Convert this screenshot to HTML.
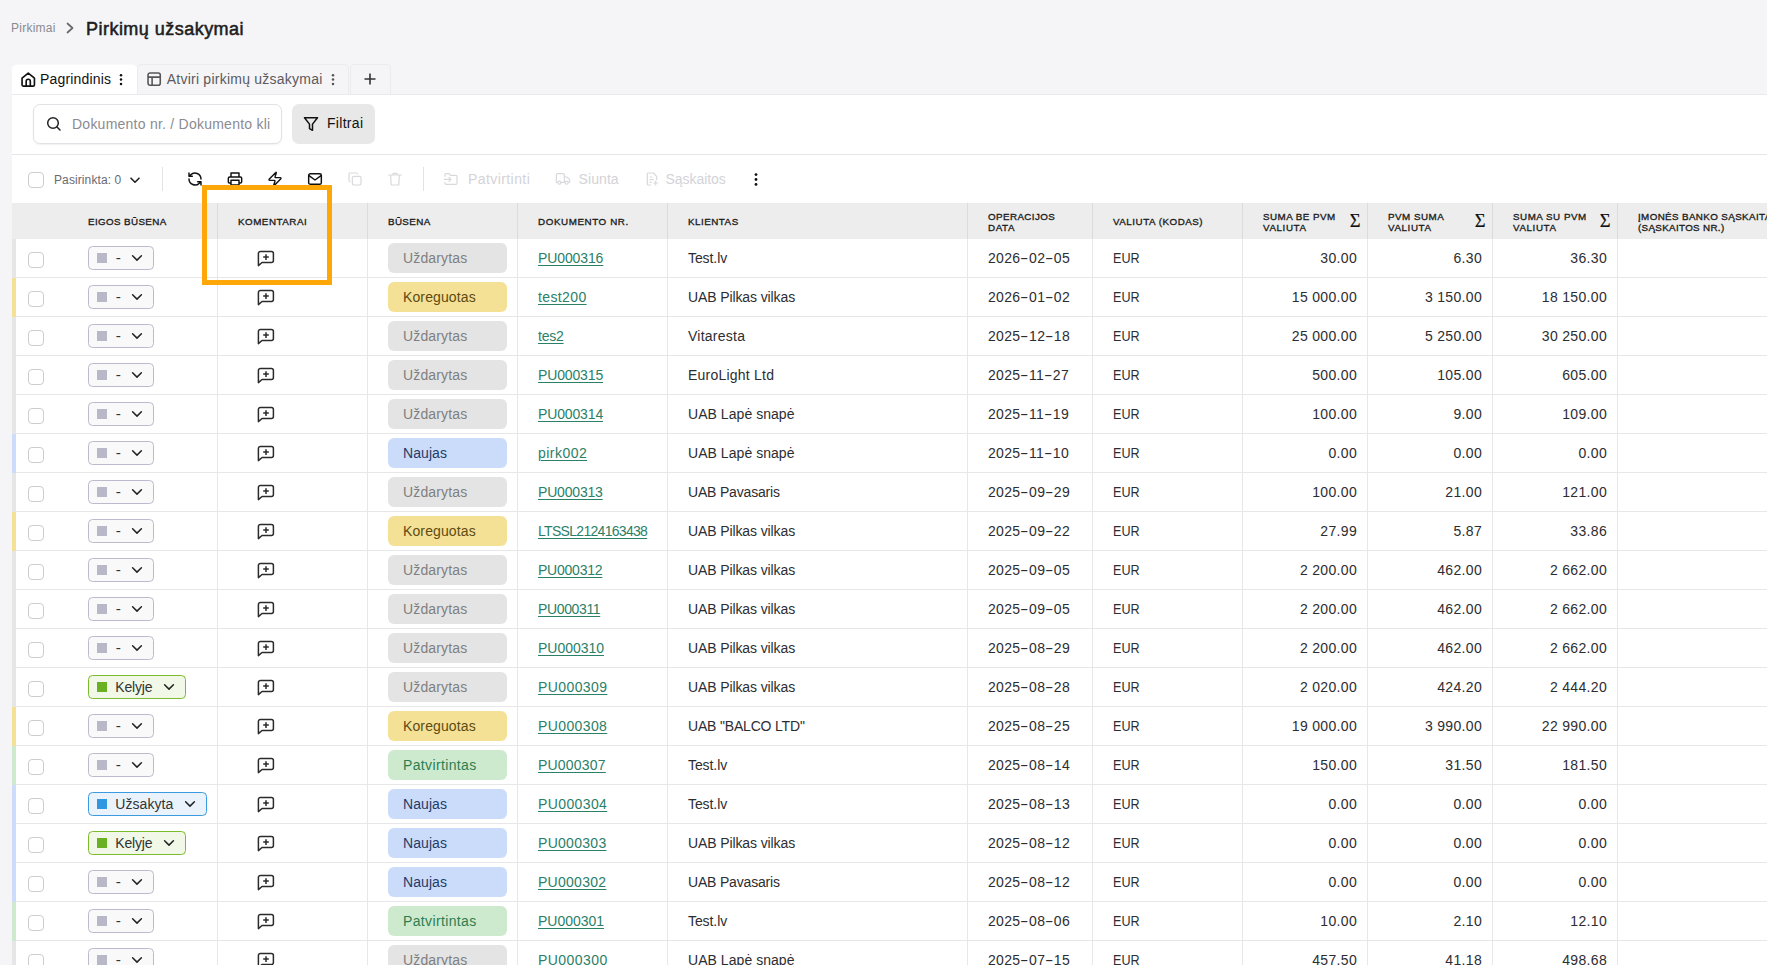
<!DOCTYPE html>
<html lang="lt">
<head>
<meta charset="utf-8">
<title>Pirkimų užsakymai</title>
<style>
*{box-sizing:border-box}
html,body{margin:0;padding:0}
body{width:1767px;height:965px;overflow:hidden;background:#f5f5f7;font-family:"Liberation Sans",sans-serif;font-size:14px;color:#2d2d31;position:relative}
svg{display:block}
.crumb{position:absolute;left:11px;top:20px;font-size:12px;line-height:16px;color:#8a8a8f;letter-spacing:.24px}
.crumbsep{position:absolute;left:65px;top:22px;width:10px;height:12px}
h1{position:absolute;left:86px;top:17px;margin:0;font-size:18px;line-height:24px;font-weight:400;color:#1d1d1f;-webkit-text-stroke:.55px #1d1d1f;letter-spacing:.47px;white-space:nowrap}
.tabs{position:absolute;left:12px;top:64px;height:31px;display:flex}
.tab{height:31px;border:1px solid #ebebee;border-bottom:none;border-radius:5px 5px 0 0;position:relative;color:#5a5a5f;font-size:14px;line-height:28px;white-space:nowrap}
.tab.act{background:#fff;color:#111;border-color:#fff;border-top-color:#f9f9fb}
.tab span{position:absolute;top:0}
.tab svg{position:absolute}
.panel{position:absolute;left:12px;top:94px;width:1760px;height:880px;background:#fff;border-top:1px solid #e9e9ec}
.search{position:absolute;left:21px;top:9px;width:249px;height:40px;border:1px solid #e2e2e6;border-radius:7px;background:#fff;box-shadow:0 1px 2px rgba(0,0,0,.06)}
.search svg{position:absolute;left:12px;top:11px;width:16px;height:16px}
.search span{position:absolute;left:38px;top:0;line-height:38px;font-size:14px;color:#8b8b90;letter-spacing:.24px;white-space:nowrap;width:200px;overflow:hidden}
.filter{position:absolute;left:280px;top:9px;width:83px;height:40px;border-radius:7px;background:#e8e8e8;color:#111}
.filter svg{position:absolute;left:11px;top:12px;width:16px;height:16px}
.filter span{position:absolute;left:35px;top:0;line-height:39px;font-size:14px;letter-spacing:.3px}
.hr{position:absolute;left:0;top:59px;width:100%;height:1px;background:#e6e6e9}
.tools{position:absolute;left:0;top:61px;width:100%;height:48px}
.cb{position:absolute;width:16px;height:16px;border:1px solid #cdcdd1;border-radius:4px;background:#fff}
.tools .cb{left:16px;top:16px}
.tools .sel{position:absolute;left:42px;top:16px;font-size:12px;line-height:16px;color:#6a6a70;letter-spacing:.1px;white-space:nowrap}
.tools .chev{position:absolute;left:117px;top:18px;width:12px;height:12px;color:#222}
.vr{position:absolute;top:11px;width:1px;height:24px;background:#e3e3e6}
.ic{position:absolute;top:15px;width:16px;height:16px}
.tbtn{position:absolute;top:0;line-height:47px;font-size:14px;color:#d3d3d8;letter-spacing:.35px;white-space:nowrap}
.thead{position:absolute;left:0;top:108px;width:100%;height:36px;background:#ededed}
.th{position:absolute;top:0;height:36px;border-left:1px solid #dcdcdf;font-size:9.8px;font-weight:400;color:#1c1c1c;-webkit-text-stroke:.33px #1c1c1c;line-height:11px;display:flex;align-items:center;padding-left:20px;white-space:nowrap;overflow:hidden}
.th.first{border-left:none}
.th>div{position:relative;top:.6px}
.th .sg{position:absolute;right:6.500px;top:8.500px;font-size:18.500px;-webkit-text-stroke:.2px #111;font-weight:400;line-height:18px;font-family:"Liberation Serif",serif;color:#111}
.tbody{position:absolute;left:0;top:144px;width:100%}
.tr{position:relative;height:39px;border-bottom:1px solid #e7e7e9;margin-left:4px}
.tr::before{content:"";position:absolute;left:-4px;top:0;width:4px;height:39px;background:#e6e6e6}
.tr.ko::before{background:#f5e196}
.tr.nw::before{background:#cddcfa}
.tr.ok::before{background:#cdeacf}
.td{position:absolute;top:0;height:38px;line-height:38px;white-space:nowrap;border-left:1px solid #e7e7e9;padding-left:20px;color:#2d2d31;letter-spacing:.05px}
.c0{left:0;width:201px;border-left:none;padding:0}
.c1{left:201px;width:150px}.c2{left:351px;width:150px}.c3{left:501px;width:150px}.c4{left:651px;width:300px}
.c5{left:951px;width:125px}.c6{left:1076px;width:150px}.c7{left:1226px;width:125px}.c8{left:1351px;width:125px}.c9{left:1476px;width:125px}.c10{left:1601px;width:200px}
.th.c0{left:0;width:205px;padding-left:76px}
.th.c1{left:205px;width:150px}.th.c2{left:355px;width:150px}.th.c3{left:505px;width:150px}.th.c4{left:655px;width:300px}.th.c5{left:955px;width:125px}.th.c6{left:1080px;width:150px}.th.c7{left:1230px;width:125px}.th.c8{left:1355px;width:125px}.th.c9{left:1480px;width:125px}.th.c10{left:1605px;width:200px}
.n{text-align:right;padding-right:10px;padding-left:0}
.num{letter-spacing:.32px}
.eur{display:inline-block;transform:scaleX(.9);transform-origin:0 50%}
.hy{display:inline-block;width:8.600px;text-align:center;letter-spacing:0;transform:scaleX(1.8)}
.dash{display:inline-block;transform:scaleX(1.1);margin-left:.8px;margin-right:-.8px}
.tr .cb{left:12px;top:13px}
.eg{position:absolute;left:72px;top:7px;height:24px;border:1px solid #bbbbcd;border-radius:4.500px;background:#f9f9fa;display:flex;align-items:center;padding:0 10px 0 8px;color:#333}
.eg i{display:block;width:10px;height:10px;background:#b8b8c8;margin-right:8.300px}
.eg b{font-weight:400;font-size:14px;line-height:21px;letter-spacing:.2px}
.eg .chev{width:12px;height:12px;margin-left:10.700px;color:#222}
.eg.e1{border-color:#7cbb2e;background:#f1f8e8}.eg.e1 i{background:#69b023}
.eg.e2{border-color:#3a9be0;background:#eaf3fc}.eg.e2 i{background:#2f97e0}
.cmt{position:absolute;left:39px;top:11px;width:18px;height:18px}
.bd{position:absolute;left:20px;top:4px;width:119px;height:30px;border-radius:6px;background:#e4e4e4;color:#7f7f7f;line-height:30px;padding-left:15px;font-size:14px;letter-spacing:.12px}
.ko .bd{background:#f5e196;color:#5e4b12}
.nw .bd{background:#cbdcfb;color:#1f3a68}
.ok .bd{background:#cdeacf;color:#2f7d4f}
.td a{color:#2b8068;text-decoration:underline;text-underline-offset:1.500px;text-decoration-thickness:1px}
.hl{position:absolute;left:202px;top:185px;width:130px;height:100px;border:5px solid #fda808;pointer-events:none}
</style>
</head>
<body>
<div class="crumb">Pirkimai</div>
<svg class="crumbsep" viewBox="0 0 10 12"><path d="M2.5 1.5L7.5 6l-5 4.5" fill="none" stroke="#6a6a6e" stroke-width="1.700" stroke-linecap="round" stroke-linejoin="round"/></svg>
<h1>Pirkimų užsakymai</h1>

<div class="tabs">
  <div class="tab act" style="width:125px">
    <svg style="left:6.800px;top:5.500px;width:16.500px;height:16.500px" viewBox="0 0 24 24"><path d="M3 10.5L12 3l9 7.500V20a2 2 0 0 1-2 2H5a2 2 0 0 1-2-2z" fill="none" stroke="#111" stroke-width="2.4" stroke-linejoin="round"/><path d="M9 22v-7a3 3 0 0 1 6 0v7" fill="none" stroke="#111" stroke-width="2.4"/></svg>
    <span style="left:27px;letter-spacing:.17px">Pagrindinis</span>
    <svg style="left:106px;top:8.500px;width:4px;height:12px" viewBox="0 0 4 12"><circle cx="2" cy="1.300" r="1.250" fill="#111"/><circle cx="2" cy="5.600" r="1.250" fill="#111"/><circle cx="2" cy="9.900" r="1.250" fill="#111"/></svg>
  </div>
  <div class="tab" style="width:212px">
    <svg style="left:7.700px;top:5.700px;width:16.300px;height:16.300px" viewBox="0 0 24 24"><rect x="3" y="3" width="18" height="18" rx="3" fill="none" stroke="#555" stroke-width="2.3"/><path d="M3 9h18M9 9v12" fill="none" stroke="#555" stroke-width="2.3"/></svg>
    <span style="left:28.700px;letter-spacing:.24px">Atviri pirkimų užsakymai</span>
    <svg style="left:192.500px;top:8.500px;width:4px;height:12px" viewBox="0 0 4 12"><circle cx="2" cy="1.300" r="1.250" fill="#555"/><circle cx="2" cy="5.600" r="1.250" fill="#555"/><circle cx="2" cy="9.900" r="1.250" fill="#555"/></svg>
  </div>
  <div class="tab" style="width:41px;margin-left:1px">
    <svg style="left:12.800px;top:8.300px;width:12px;height:12px" viewBox="0 0 12 12"><path d="M6 0.500v11M0.500 6h11" stroke="#333" stroke-width="1.6" fill="none"/></svg>
  </div>
</div>

<div class="panel">
  <div class="search">
    <svg viewBox="0 0 16 16"><circle cx="7" cy="7" r="5.300" fill="none" stroke="#222" stroke-width="1.5"/><path d="M11 11l3 3" stroke="#222" stroke-width="1.5" stroke-linecap="round"/></svg>
    <span>Dokumento nr. / Dokumento kli</span>
  </div>
  <div class="filter">
    <svg viewBox="0 0 16 16"><path d="M1.5 1.700h13l-5 6.400V14.300l-3-1.700V8.100z" fill="none" stroke="#111" stroke-width="1.5" stroke-linejoin="round"/></svg>
    <span>Filtrai</span>
  </div>
  <div class="hr"></div>
  <div class="tools">
    <span class="cb"></span>
    <span class="sel">Pasirinkta: 0</span>
    <svg class="chev" viewBox="0 0 12 12"><path d="M2 4.2l4 4 4-4" fill="none" stroke="currentColor" stroke-width="1.6" stroke-linecap="round" stroke-linejoin="round"/></svg>
    <span class="vr" style="left:150px"></span>
    <svg class="ic" style="left:175px" viewBox="0 0 24 24"><path d="M21 12a9 9 0 0 0-15.500-6.200L3 8M3 3v5h5M3 12a9 9 0 0 0 15.500 6.200L21 16M21 21v-5h-5" fill="none" stroke="#111" stroke-width="2.2" stroke-linecap="round" stroke-linejoin="round"/></svg>
    <svg class="ic" style="left:215px" viewBox="0 0 24 24"><path d="M6 9V3h12v6M6 18H4a2 2 0 0 1-2-2v-5a2 2 0 0 1 2-2h16a2 2 0 0 1 2 2v5a2 2 0 0 1-2 2h-2M6 14h12v7H6z" fill="none" stroke="#111" stroke-width="2.2" stroke-linecap="round" stroke-linejoin="round"/></svg>
    <svg class="ic" style="left:255px" viewBox="0 0 24 24"><path d="M4 14a1 1 0 0 1-.78-1.630l9.900-10.200a.5.5 0 0 1 .86.460l-1.920 6.020A1 1 0 0 0 13 10h7a1 1 0 0 1 .78 1.630l-9.900 10.200a.5.5 0 0 1-.86-.460l1.920-6.020A1 1 0 0 0 11 14z" fill="none" stroke="#111" stroke-width="2.1" stroke-linecap="round" stroke-linejoin="round"/></svg>
    <svg class="ic" style="left:295px" viewBox="0 0 24 24"><rect x="2.500" y="4" width="19" height="16" rx="2.500" fill="none" stroke="#111" stroke-width="2.2"/><path d="M3 7l9 6.500L21 7" fill="none" stroke="#111" stroke-width="2.2" stroke-linecap="round" stroke-linejoin="round"/></svg>
    <svg class="ic" style="left:335px" viewBox="0 0 24 24"><rect x="8" y="8" width="13" height="13" rx="2.500" fill="none" stroke="#d9d9dd" stroke-width="1.800"/><path d="M5 16H4.500A1.500 1.500 0 0 1 3 14.500v-10A1.500 1.500 0 0 1 4.500 3h10A1.500 1.500 0 0 1 16 4.500V5" fill="none" stroke="#d9d9dd" stroke-width="1.800"/></svg>
    <svg class="ic" style="left:375px" viewBox="0 0 24 24"><path d="M2.500 6h19M9 6V3.500h6V6M5.500 6l.8 15h11.400l.8-15" fill="none" stroke="#d9d9dd" stroke-width="1.800" stroke-linejoin="round" stroke-linecap="round"/></svg>
    <span class="vr" style="left:411px"></span>
    <svg class="ic" style="left:431px" viewBox="0 0 24 24"><path d="M3 8V5.500A1.500 1.500 0 0 1 4.500 4H9l2 2.500h8.500A1.500 1.500 0 0 1 21 8v10.500a1.500 1.500 0 0 1-1.500 1.500h-15A1.500 1.500 0 0 1 3 18.500V17M2 12.500h10M9 9.500l3 3-3 3" fill="none" stroke="#d9d9dd" stroke-width="1.800" stroke-linecap="round" stroke-linejoin="round"/></svg>
    <span class="tbtn" style="left:456px;letter-spacing:.42px">Patvirtinti</span>
    <svg class="ic" style="left:543px" viewBox="0 0 24 24"><path d="M14 17V5.500A1.500 1.500 0 0 0 12.500 4h-9A1.500 1.500 0 0 0 2 5.500V17h2M14 9h4l4 4v4h-2M9 17h6" fill="none" stroke="#d9d9dd" stroke-width="1.800" stroke-linejoin="round"/><circle cx="6.500" cy="17.500" r="2.300" fill="none" stroke="#d9d9dd" stroke-width="1.800"/><circle cx="17.500" cy="17.500" r="2.300" fill="none" stroke="#d9d9dd" stroke-width="1.800"/></svg>
    <span class="tbtn" style="left:566.500px;letter-spacing:.09px">Siunta</span>
    <svg class="ic" style="left:632px" viewBox="0 0 24 24"><path d="M10 21H6.500A1.500 1.500 0 0 1 5 19.500v-15A1.500 1.500 0 0 1 6.500 3H14l5 5v5M9 9h3M9 13h5M9 17h2M17.500 15v6M14.500 18h6" fill="none" stroke="#d9d9dd" stroke-width="1.800" stroke-linecap="round" stroke-linejoin="round"/></svg>
    <span class="tbtn" style="left:653.500px;letter-spacing:-.05px">Sąskaitos</span>
    <svg class="ic" style="left:742px;top:17px;width:4px;height:13px" viewBox="0 0 4 13"><circle cx="2" cy="1.600" r="1.400" fill="#111"/><circle cx="2" cy="6.500" r="1.400" fill="#111"/><circle cx="2" cy="11.400" r="1.400" fill="#111"/></svg>
  </div>

  <div class="thead">
    <div class="th c0 first"><span style="letter-spacing:0.378px">EIGOS BŪSENA</span></div>
    <div class="th c1"><span style="letter-spacing:0.515px">KOMENTARAI</span></div>
    <div class="th c2"><span style="letter-spacing:0.381px">BŪSENA</span></div>
    <div class="th c3"><span style="letter-spacing:0.591px">DOKUMENTO NR.</span></div>
    <div class="th c4"><span style="letter-spacing:0.508px">KLIENTAS</span></div>
    <div class="th c5"><div><span style="letter-spacing:0.405px">OPERACIJOS</span><br><span style="letter-spacing:0.604px">DATA</span></div></div>
    <div class="th c6"><span style="letter-spacing:0.515px">VALIUTA (KODAS)</span></div>
    <div class="th c7"><div><span style="letter-spacing:0.468px">SUMA BE PVM</span><br><span style="letter-spacing:0.602px">VALIUTA</span></div><span class="sg">Σ</span></div>
    <div class="th c8"><div><span style="letter-spacing:0.505px">PVM SUMA</span><br><span style="letter-spacing:0.602px">VALIUTA</span></div><span class="sg">Σ</span></div>
    <div class="th c9"><div><span style="letter-spacing:0.514px">SUMA SU PVM</span><br><span style="letter-spacing:0.602px">VALIUTA</span></div><span class="sg">Σ</span></div>
    <div class="th c10"><div><span style="letter-spacing:0.381px">ĮMONĖS BANKO SĄSKAITA</span><br><span style="letter-spacing:0.337px">(SĄSKAITOS NR.)</span></div></div>
  </div>
  <div class="tbody">
<div class="tr cl"><div class="td c0"><span class="cb"></span><span class="eg e0"><i></i><b><span class="dash">-</span></b><svg class="chev" viewBox="0 0 12 12"><path d="M1.6 3.700l4.400 4.400 4.400-4.400" fill="none" stroke="currentColor" stroke-width="1.5" stroke-linecap="round" stroke-linejoin="round"/></svg></span></div><div class="td c1"><svg class="cmt" viewBox="0 0 18 18"><path d="M3.4 1.4H14.400a2 2 0 0 1 2 2V10.500a2 2 0 0 1-2 2H5L1.4 15.600V3.400a2 2 0 0 1 2-2z" fill="none" stroke="#2b2b2b" stroke-width="1.5" stroke-linejoin="round"/><path d="M9 4.300v5.600M6.200 7.100h5.600" fill="none" stroke="#2b2b2b" stroke-width="1.5"/></svg></div><div class="td c2"><span class="bd"><span style="letter-spacing:0.146px">Uždarytas</span></span></div><div class="td c3"><a><span style="letter-spacing:-0.11px">PU000316</span></a></div><div class="td c4"><span style="letter-spacing:-0.081px">Test.lv</span></div><div class="td c5 num">2026<span class="hy">-</span>02<span class="hy">-</span>05</div><div class="td c6"><span class="eur">EUR</span></div><div class="td c7 n num">30.00</div><div class="td c8 n num">6.30</div><div class="td c9 n num">36.30</div><div class="td c10"></div></div>
<div class="tr ko"><div class="td c0"><span class="cb"></span><span class="eg e0"><i></i><b><span class="dash">-</span></b><svg class="chev" viewBox="0 0 12 12"><path d="M1.6 3.700l4.400 4.400 4.400-4.400" fill="none" stroke="currentColor" stroke-width="1.5" stroke-linecap="round" stroke-linejoin="round"/></svg></span></div><div class="td c1"><svg class="cmt" viewBox="0 0 18 18"><path d="M3.4 1.4H14.400a2 2 0 0 1 2 2V10.500a2 2 0 0 1-2 2H5L1.4 15.600V3.400a2 2 0 0 1 2-2z" fill="none" stroke="#2b2b2b" stroke-width="1.5" stroke-linejoin="round"/><path d="M9 4.300v5.600M6.200 7.100h5.600" fill="none" stroke="#2b2b2b" stroke-width="1.5"/></svg></div><div class="td c2"><span class="bd"><span style="letter-spacing:0.121px">Koreguotas</span></span></div><div class="td c3"><a><span style="letter-spacing:0.377px">test200</span></a></div><div class="td c4"><span style="letter-spacing:-0.108px">UAB Pilkas vilkas</span></div><div class="td c5 num">2026<span class="hy">-</span>01<span class="hy">-</span>02</div><div class="td c6"><span class="eur">EUR</span></div><div class="td c7 n num">15 000.00</div><div class="td c8 n num">3 150.00</div><div class="td c9 n num">18 150.00</div><div class="td c10"></div></div>
<div class="tr cl"><div class="td c0"><span class="cb"></span><span class="eg e0"><i></i><b><span class="dash">-</span></b><svg class="chev" viewBox="0 0 12 12"><path d="M1.6 3.700l4.400 4.400 4.400-4.400" fill="none" stroke="currentColor" stroke-width="1.5" stroke-linecap="round" stroke-linejoin="round"/></svg></span></div><div class="td c1"><svg class="cmt" viewBox="0 0 18 18"><path d="M3.4 1.4H14.400a2 2 0 0 1 2 2V10.500a2 2 0 0 1-2 2H5L1.4 15.600V3.400a2 2 0 0 1 2-2z" fill="none" stroke="#2b2b2b" stroke-width="1.5" stroke-linejoin="round"/><path d="M9 4.300v5.600M6.200 7.100h5.600" fill="none" stroke="#2b2b2b" stroke-width="1.5"/></svg></div><div class="td c2"><span class="bd"><span style="letter-spacing:0.146px">Uždarytas</span></span></div><div class="td c3"><a><span style="letter-spacing:-0.223px">tes2</span></a></div><div class="td c4"><span style="letter-spacing:0.25px">Vitaresta</span></div><div class="td c5 num">2025<span class="hy">-</span>12<span class="hy">-</span>18</div><div class="td c6"><span class="eur">EUR</span></div><div class="td c7 n num">25 000.00</div><div class="td c8 n num">5 250.00</div><div class="td c9 n num">30 250.00</div><div class="td c10"></div></div>
<div class="tr cl"><div class="td c0"><span class="cb"></span><span class="eg e0"><i></i><b><span class="dash">-</span></b><svg class="chev" viewBox="0 0 12 12"><path d="M1.6 3.700l4.400 4.400 4.400-4.400" fill="none" stroke="currentColor" stroke-width="1.5" stroke-linecap="round" stroke-linejoin="round"/></svg></span></div><div class="td c1"><svg class="cmt" viewBox="0 0 18 18"><path d="M3.4 1.4H14.400a2 2 0 0 1 2 2V10.500a2 2 0 0 1-2 2H5L1.4 15.600V3.400a2 2 0 0 1 2-2z" fill="none" stroke="#2b2b2b" stroke-width="1.5" stroke-linejoin="round"/><path d="M9 4.300v5.600M6.200 7.100h5.600" fill="none" stroke="#2b2b2b" stroke-width="1.5"/></svg></div><div class="td c2"><span class="bd"><span style="letter-spacing:0.146px">Uždarytas</span></span></div><div class="td c3"><a><span style="letter-spacing:-0.139px">PU000315</span></a></div><div class="td c4"><span style="letter-spacing:0.225px">EuroLight Ltd</span></div><div class="td c5 num">2025<span class="hy">-</span>11<span class="hy">-</span>27</div><div class="td c6"><span class="eur">EUR</span></div><div class="td c7 n num">500.00</div><div class="td c8 n num">105.00</div><div class="td c9 n num">605.00</div><div class="td c10"></div></div>
<div class="tr cl"><div class="td c0"><span class="cb"></span><span class="eg e0"><i></i><b><span class="dash">-</span></b><svg class="chev" viewBox="0 0 12 12"><path d="M1.6 3.700l4.400 4.400 4.400-4.400" fill="none" stroke="currentColor" stroke-width="1.5" stroke-linecap="round" stroke-linejoin="round"/></svg></span></div><div class="td c1"><svg class="cmt" viewBox="0 0 18 18"><path d="M3.4 1.4H14.400a2 2 0 0 1 2 2V10.500a2 2 0 0 1-2 2H5L1.4 15.600V3.400a2 2 0 0 1 2-2z" fill="none" stroke="#2b2b2b" stroke-width="1.5" stroke-linejoin="round"/><path d="M9 4.300v5.600M6.200 7.100h5.600" fill="none" stroke="#2b2b2b" stroke-width="1.5"/></svg></div><div class="td c2"><span class="bd"><span style="letter-spacing:0.146px">Uždarytas</span></span></div><div class="td c3"><a><span style="letter-spacing:-0.139px">PU000314</span></a></div><div class="td c4"><span style="letter-spacing:0.049px">UAB Lapė snapė</span></div><div class="td c5 num">2025<span class="hy">-</span>11<span class="hy">-</span>19</div><div class="td c6"><span class="eur">EUR</span></div><div class="td c7 n num">100.00</div><div class="td c8 n num">9.00</div><div class="td c9 n num">109.00</div><div class="td c10"></div></div>
<div class="tr nw"><div class="td c0"><span class="cb"></span><span class="eg e0"><i></i><b><span class="dash">-</span></b><svg class="chev" viewBox="0 0 12 12"><path d="M1.6 3.700l4.400 4.400 4.400-4.400" fill="none" stroke="currentColor" stroke-width="1.5" stroke-linecap="round" stroke-linejoin="round"/></svg></span></div><div class="td c1"><svg class="cmt" viewBox="0 0 18 18"><path d="M3.4 1.4H14.400a2 2 0 0 1 2 2V10.500a2 2 0 0 1-2 2H5L1.4 15.600V3.400a2 2 0 0 1 2-2z" fill="none" stroke="#2b2b2b" stroke-width="1.5" stroke-linejoin="round"/><path d="M9 4.300v5.600M6.200 7.100h5.600" fill="none" stroke="#2b2b2b" stroke-width="1.5"/></svg></div><div class="td c2"><span class="bd"><span style="letter-spacing:0.081px">Naujas</span></span></div><div class="td c3"><a><span style="letter-spacing:0.463px">pirk002</span></a></div><div class="td c4"><span style="letter-spacing:0.049px">UAB Lapė snapė</span></div><div class="td c5 num">2025<span class="hy">-</span>11<span class="hy">-</span>10</div><div class="td c6"><span class="eur">EUR</span></div><div class="td c7 n num">0.00</div><div class="td c8 n num">0.00</div><div class="td c9 n num">0.00</div><div class="td c10"></div></div>
<div class="tr cl"><div class="td c0"><span class="cb"></span><span class="eg e0"><i></i><b><span class="dash">-</span></b><svg class="chev" viewBox="0 0 12 12"><path d="M1.6 3.700l4.400 4.400 4.400-4.400" fill="none" stroke="currentColor" stroke-width="1.5" stroke-linecap="round" stroke-linejoin="round"/></svg></span></div><div class="td c1"><svg class="cmt" viewBox="0 0 18 18"><path d="M3.4 1.4H14.400a2 2 0 0 1 2 2V10.500a2 2 0 0 1-2 2H5L1.4 15.600V3.400a2 2 0 0 1 2-2z" fill="none" stroke="#2b2b2b" stroke-width="1.5" stroke-linejoin="round"/><path d="M9 4.300v5.600M6.200 7.100h5.600" fill="none" stroke="#2b2b2b" stroke-width="1.5"/></svg></div><div class="td c2"><span class="bd"><span style="letter-spacing:0.146px">Uždarytas</span></span></div><div class="td c3"><a><span style="letter-spacing:-0.182px">PU000313</span></a></div><div class="td c4"><span style="letter-spacing:-0.18px">UAB Pavasaris</span></div><div class="td c5 num">2025<span class="hy">-</span>09<span class="hy">-</span>29</div><div class="td c6"><span class="eur">EUR</span></div><div class="td c7 n num">100.00</div><div class="td c8 n num">21.00</div><div class="td c9 n num">121.00</div><div class="td c10"></div></div>
<div class="tr ko"><div class="td c0"><span class="cb"></span><span class="eg e0"><i></i><b><span class="dash">-</span></b><svg class="chev" viewBox="0 0 12 12"><path d="M1.6 3.700l4.400 4.400 4.400-4.400" fill="none" stroke="currentColor" stroke-width="1.5" stroke-linecap="round" stroke-linejoin="round"/></svg></span></div><div class="td c1"><svg class="cmt" viewBox="0 0 18 18"><path d="M3.4 1.4H14.400a2 2 0 0 1 2 2V10.500a2 2 0 0 1-2 2H5L1.4 15.600V3.400a2 2 0 0 1 2-2z" fill="none" stroke="#2b2b2b" stroke-width="1.5" stroke-linejoin="round"/><path d="M9 4.300v5.600M6.200 7.100h5.600" fill="none" stroke="#2b2b2b" stroke-width="1.5"/></svg></div><div class="td c2"><span class="bd"><span style="letter-spacing:0.121px">Koreguotas</span></span></div><div class="td c3"><a><span style="letter-spacing:-0.695px">LTSSL2124163438</span></a></div><div class="td c4"><span style="letter-spacing:-0.108px">UAB Pilkas vilkas</span></div><div class="td c5 num">2025<span class="hy">-</span>09<span class="hy">-</span>22</div><div class="td c6"><span class="eur">EUR</span></div><div class="td c7 n num">27.99</div><div class="td c8 n num">5.87</div><div class="td c9 n num">33.86</div><div class="td c10"></div></div>
<div class="tr cl"><div class="td c0"><span class="cb"></span><span class="eg e0"><i></i><b><span class="dash">-</span></b><svg class="chev" viewBox="0 0 12 12"><path d="M1.6 3.700l4.400 4.400 4.400-4.400" fill="none" stroke="currentColor" stroke-width="1.5" stroke-linecap="round" stroke-linejoin="round"/></svg></span></div><div class="td c1"><svg class="cmt" viewBox="0 0 18 18"><path d="M3.4 1.4H14.400a2 2 0 0 1 2 2V10.500a2 2 0 0 1-2 2H5L1.4 15.600V3.400a2 2 0 0 1 2-2z" fill="none" stroke="#2b2b2b" stroke-width="1.5" stroke-linejoin="round"/><path d="M9 4.300v5.600M6.200 7.100h5.600" fill="none" stroke="#2b2b2b" stroke-width="1.5"/></svg></div><div class="td c2"><span class="bd"><span style="letter-spacing:0.146px">Uždarytas</span></span></div><div class="td c3"><a><span style="letter-spacing:-0.225px">PU000312</span></a></div><div class="td c4"><span style="letter-spacing:-0.108px">UAB Pilkas vilkas</span></div><div class="td c5 num">2025<span class="hy">-</span>09<span class="hy">-</span>05</div><div class="td c6"><span class="eur">EUR</span></div><div class="td c7 n num">2 200.00</div><div class="td c8 n num">462.00</div><div class="td c9 n num">2 662.00</div><div class="td c10"></div></div>
<div class="tr cl"><div class="td c0"><span class="cb"></span><span class="eg e0"><i></i><b><span class="dash">-</span></b><svg class="chev" viewBox="0 0 12 12"><path d="M1.6 3.700l4.400 4.400 4.400-4.400" fill="none" stroke="currentColor" stroke-width="1.5" stroke-linecap="round" stroke-linejoin="round"/></svg></span></div><div class="td c1"><svg class="cmt" viewBox="0 0 18 18"><path d="M3.4 1.4H14.400a2 2 0 0 1 2 2V10.500a2 2 0 0 1-2 2H5L1.4 15.600V3.400a2 2 0 0 1 2-2z" fill="none" stroke="#2b2b2b" stroke-width="1.5" stroke-linejoin="round"/><path d="M9 4.300v5.600M6.200 7.100h5.600" fill="none" stroke="#2b2b2b" stroke-width="1.5"/></svg></div><div class="td c2"><span class="bd"><span style="letter-spacing:0.146px">Uždarytas</span></span></div><div class="td c3"><a><span style="letter-spacing:-0.363px">PU000311</span></a></div><div class="td c4"><span style="letter-spacing:-0.108px">UAB Pilkas vilkas</span></div><div class="td c5 num">2025<span class="hy">-</span>09<span class="hy">-</span>05</div><div class="td c6"><span class="eur">EUR</span></div><div class="td c7 n num">2 200.00</div><div class="td c8 n num">462.00</div><div class="td c9 n num">2 662.00</div><div class="td c10"></div></div>
<div class="tr cl"><div class="td c0"><span class="cb"></span><span class="eg e0"><i></i><b><span class="dash">-</span></b><svg class="chev" viewBox="0 0 12 12"><path d="M1.6 3.700l4.400 4.400 4.400-4.400" fill="none" stroke="currentColor" stroke-width="1.5" stroke-linecap="round" stroke-linejoin="round"/></svg></span></div><div class="td c1"><svg class="cmt" viewBox="0 0 18 18"><path d="M3.4 1.4H14.400a2 2 0 0 1 2 2V10.500a2 2 0 0 1-2 2H5L1.4 15.600V3.400a2 2 0 0 1 2-2z" fill="none" stroke="#2b2b2b" stroke-width="1.5" stroke-linejoin="round"/><path d="M9 4.300v5.600M6.200 7.100h5.600" fill="none" stroke="#2b2b2b" stroke-width="1.5"/></svg></div><div class="td c2"><span class="bd"><span style="letter-spacing:0.146px">Uždarytas</span></span></div><div class="td c3"><a><span style="letter-spacing:-0.025px">PU000310</span></a></div><div class="td c4"><span style="letter-spacing:-0.108px">UAB Pilkas vilkas</span></div><div class="td c5 num">2025<span class="hy">-</span>08<span class="hy">-</span>29</div><div class="td c6"><span class="eur">EUR</span></div><div class="td c7 n num">2 200.00</div><div class="td c8 n num">462.00</div><div class="td c9 n num">2 662.00</div><div class="td c10"></div></div>
<div class="tr cl"><div class="td c0"><span class="cb"></span><span class="eg e1"><i></i><b><span style="letter-spacing:-0.188px">Kelyje</span></b><svg class="chev" viewBox="0 0 12 12"><path d="M1.6 3.700l4.400 4.400 4.400-4.400" fill="none" stroke="currentColor" stroke-width="1.5" stroke-linecap="round" stroke-linejoin="round"/></svg></span></div><div class="td c1"><svg class="cmt" viewBox="0 0 18 18"><path d="M3.4 1.4H14.400a2 2 0 0 1 2 2V10.500a2 2 0 0 1-2 2H5L1.4 15.600V3.400a2 2 0 0 1 2-2z" fill="none" stroke="#2b2b2b" stroke-width="1.5" stroke-linejoin="round"/><path d="M9 4.300v5.600M6.200 7.100h5.600" fill="none" stroke="#2b2b2b" stroke-width="1.5"/></svg></div><div class="td c2"><span class="bd"><span style="letter-spacing:0.146px">Uždarytas</span></span></div><div class="td c3"><a><span style="letter-spacing:0.404px">PU000309</span></a></div><div class="td c4"><span style="letter-spacing:-0.108px">UAB Pilkas vilkas</span></div><div class="td c5 num">2025<span class="hy">-</span>08<span class="hy">-</span>28</div><div class="td c6"><span class="eur">EUR</span></div><div class="td c7 n num">2 020.00</div><div class="td c8 n num">424.20</div><div class="td c9 n num">2 444.20</div><div class="td c10"></div></div>
<div class="tr ko"><div class="td c0"><span class="cb"></span><span class="eg e0"><i></i><b><span class="dash">-</span></b><svg class="chev" viewBox="0 0 12 12"><path d="M1.6 3.700l4.400 4.400 4.400-4.400" fill="none" stroke="currentColor" stroke-width="1.5" stroke-linecap="round" stroke-linejoin="round"/></svg></span></div><div class="td c1"><svg class="cmt" viewBox="0 0 18 18"><path d="M3.4 1.4H14.400a2 2 0 0 1 2 2V10.500a2 2 0 0 1-2 2H5L1.4 15.600V3.400a2 2 0 0 1 2-2z" fill="none" stroke="#2b2b2b" stroke-width="1.5" stroke-linejoin="round"/><path d="M9 4.300v5.600M6.200 7.100h5.600" fill="none" stroke="#2b2b2b" stroke-width="1.5"/></svg></div><div class="td c2"><span class="bd"><span style="letter-spacing:0.121px">Koreguotas</span></span></div><div class="td c3"><a><span style="letter-spacing:0.39px">PU000308</span></a></div><div class="td c4"><span style="letter-spacing:-0.178px">UAB &quot;BALCO LTD&quot;</span></div><div class="td c5 num">2025<span class="hy">-</span>08<span class="hy">-</span>25</div><div class="td c6"><span class="eur">EUR</span></div><div class="td c7 n num">19 000.00</div><div class="td c8 n num">3 990.00</div><div class="td c9 n num">22 990.00</div><div class="td c10"></div></div>
<div class="tr ok"><div class="td c0"><span class="cb"></span><span class="eg e0"><i></i><b><span class="dash">-</span></b><svg class="chev" viewBox="0 0 12 12"><path d="M1.6 3.700l4.400 4.400 4.400-4.400" fill="none" stroke="currentColor" stroke-width="1.5" stroke-linecap="round" stroke-linejoin="round"/></svg></span></div><div class="td c1"><svg class="cmt" viewBox="0 0 18 18"><path d="M3.4 1.4H14.400a2 2 0 0 1 2 2V10.500a2 2 0 0 1-2 2H5L1.4 15.600V3.400a2 2 0 0 1 2-2z" fill="none" stroke="#2b2b2b" stroke-width="1.5" stroke-linejoin="round"/><path d="M9 4.300v5.600M6.200 7.100h5.600" fill="none" stroke="#2b2b2b" stroke-width="1.5"/></svg></div><div class="td c2"><span class="bd"><span style="letter-spacing:0.359px">Patvirtintas</span></span></div><div class="td c3"><a><span style="letter-spacing:0.204px">PU000307</span></a></div><div class="td c4"><span style="letter-spacing:-0.081px">Test.lv</span></div><div class="td c5 num">2025<span class="hy">-</span>08<span class="hy">-</span>14</div><div class="td c6"><span class="eur">EUR</span></div><div class="td c7 n num">150.00</div><div class="td c8 n num">31.50</div><div class="td c9 n num">181.50</div><div class="td c10"></div></div>
<div class="tr nw"><div class="td c0"><span class="cb"></span><span class="eg e2"><i></i><b><span style="letter-spacing:0.046px">Užsakyta</span></b><svg class="chev" viewBox="0 0 12 12"><path d="M1.6 3.700l4.400 4.400 4.400-4.400" fill="none" stroke="currentColor" stroke-width="1.5" stroke-linecap="round" stroke-linejoin="round"/></svg></span></div><div class="td c1"><svg class="cmt" viewBox="0 0 18 18"><path d="M3.4 1.4H14.400a2 2 0 0 1 2 2V10.500a2 2 0 0 1-2 2H5L1.4 15.600V3.400a2 2 0 0 1 2-2z" fill="none" stroke="#2b2b2b" stroke-width="1.5" stroke-linejoin="round"/><path d="M9 4.300v5.600M6.200 7.100h5.600" fill="none" stroke="#2b2b2b" stroke-width="1.5"/></svg></div><div class="td c2"><span class="bd"><span style="letter-spacing:0.081px">Naujas</span></span></div><div class="td c3"><a><span style="letter-spacing:0.39px">PU000304</span></a></div><div class="td c4"><span style="letter-spacing:-0.081px">Test.lv</span></div><div class="td c5 num">2025<span class="hy">-</span>08<span class="hy">-</span>13</div><div class="td c6"><span class="eur">EUR</span></div><div class="td c7 n num">0.00</div><div class="td c8 n num">0.00</div><div class="td c9 n num">0.00</div><div class="td c10"></div></div>
<div class="tr nw"><div class="td c0"><span class="cb"></span><span class="eg e1"><i></i><b><span style="letter-spacing:-0.188px">Kelyje</span></b><svg class="chev" viewBox="0 0 12 12"><path d="M1.6 3.700l4.400 4.400 4.400-4.400" fill="none" stroke="currentColor" stroke-width="1.5" stroke-linecap="round" stroke-linejoin="round"/></svg></span></div><div class="td c1"><svg class="cmt" viewBox="0 0 18 18"><path d="M3.4 1.4H14.400a2 2 0 0 1 2 2V10.500a2 2 0 0 1-2 2H5L1.4 15.600V3.400a2 2 0 0 1 2-2z" fill="none" stroke="#2b2b2b" stroke-width="1.5" stroke-linejoin="round"/><path d="M9 4.300v5.600M6.200 7.100h5.600" fill="none" stroke="#2b2b2b" stroke-width="1.5"/></svg></div><div class="td c2"><span class="bd"><span style="letter-spacing:0.081px">Naujas</span></span></div><div class="td c3"><a><span style="letter-spacing:0.29px">PU000303</span></a></div><div class="td c4"><span style="letter-spacing:-0.108px">UAB Pilkas vilkas</span></div><div class="td c5 num">2025<span class="hy">-</span>08<span class="hy">-</span>12</div><div class="td c6"><span class="eur">EUR</span></div><div class="td c7 n num">0.00</div><div class="td c8 n num">0.00</div><div class="td c9 n num">0.00</div><div class="td c10"></div></div>
<div class="tr nw"><div class="td c0"><span class="cb"></span><span class="eg e0"><i></i><b><span class="dash">-</span></b><svg class="chev" viewBox="0 0 12 12"><path d="M1.6 3.700l4.400 4.400 4.400-4.400" fill="none" stroke="currentColor" stroke-width="1.5" stroke-linecap="round" stroke-linejoin="round"/></svg></span></div><div class="td c1"><svg class="cmt" viewBox="0 0 18 18"><path d="M3.4 1.4H14.400a2 2 0 0 1 2 2V10.500a2 2 0 0 1-2 2H5L1.4 15.600V3.400a2 2 0 0 1 2-2z" fill="none" stroke="#2b2b2b" stroke-width="1.5" stroke-linejoin="round"/><path d="M9 4.300v5.600M6.200 7.100h5.600" fill="none" stroke="#2b2b2b" stroke-width="1.5"/></svg></div><div class="td c2"><span class="bd"><span style="letter-spacing:0.081px">Naujas</span></span></div><div class="td c3"><a><span style="letter-spacing:0.275px">PU000302</span></a></div><div class="td c4"><span style="letter-spacing:-0.18px">UAB Pavasaris</span></div><div class="td c5 num">2025<span class="hy">-</span>08<span class="hy">-</span>12</div><div class="td c6"><span class="eur">EUR</span></div><div class="td c7 n num">0.00</div><div class="td c8 n num">0.00</div><div class="td c9 n num">0.00</div><div class="td c10"></div></div>
<div class="tr ok"><div class="td c0"><span class="cb"></span><span class="eg e0"><i></i><b><span class="dash">-</span></b><svg class="chev" viewBox="0 0 12 12"><path d="M1.6 3.700l4.400 4.400 4.400-4.400" fill="none" stroke="currentColor" stroke-width="1.5" stroke-linecap="round" stroke-linejoin="round"/></svg></span></div><div class="td c1"><svg class="cmt" viewBox="0 0 18 18"><path d="M3.4 1.4H14.400a2 2 0 0 1 2 2V10.500a2 2 0 0 1-2 2H5L1.4 15.600V3.400a2 2 0 0 1 2-2z" fill="none" stroke="#2b2b2b" stroke-width="1.5" stroke-linejoin="round"/><path d="M9 4.300v5.600M6.200 7.100h5.600" fill="none" stroke="#2b2b2b" stroke-width="1.5"/></svg></div><div class="td c2"><span class="bd"><span style="letter-spacing:0.359px">Patvirtintas</span></span></div><div class="td c3"><a><span style="letter-spacing:-0.025px">PU000301</span></a></div><div class="td c4"><span style="letter-spacing:-0.081px">Test.lv</span></div><div class="td c5 num">2025<span class="hy">-</span>08<span class="hy">-</span>06</div><div class="td c6"><span class="eur">EUR</span></div><div class="td c7 n num">10.00</div><div class="td c8 n num">2.10</div><div class="td c9 n num">12.10</div><div class="td c10"></div></div>
<div class="tr cl"><div class="td c0"><span class="cb"></span><span class="eg e0"><i></i><b><span class="dash">-</span></b><svg class="chev" viewBox="0 0 12 12"><path d="M1.6 3.700l4.400 4.400 4.400-4.400" fill="none" stroke="currentColor" stroke-width="1.5" stroke-linecap="round" stroke-linejoin="round"/></svg></span></div><div class="td c1"><svg class="cmt" viewBox="0 0 18 18"><path d="M3.4 1.4H14.400a2 2 0 0 1 2 2V10.500a2 2 0 0 1-2 2H5L1.4 15.600V3.400a2 2 0 0 1 2-2z" fill="none" stroke="#2b2b2b" stroke-width="1.5" stroke-linejoin="round"/><path d="M9 4.300v5.600M6.200 7.100h5.600" fill="none" stroke="#2b2b2b" stroke-width="1.5"/></svg></div><div class="td c2"><span class="bd"><span style="letter-spacing:0.146px">Uždarytas</span></span></div><div class="td c3"><a><span style="letter-spacing:0.461px">PU000300</span></a></div><div class="td c4"><span style="letter-spacing:0.049px">UAB Lapė snapė</span></div><div class="td c5 num">2025<span class="hy">-</span>07<span class="hy">-</span>15</div><div class="td c6"><span class="eur">EUR</span></div><div class="td c7 n num">457.50</div><div class="td c8 n num">41.18</div><div class="td c9 n num">498.68</div><div class="td c10"></div></div>
  </div>
</div>
<div class="hl"></div>
</body>
</html>
